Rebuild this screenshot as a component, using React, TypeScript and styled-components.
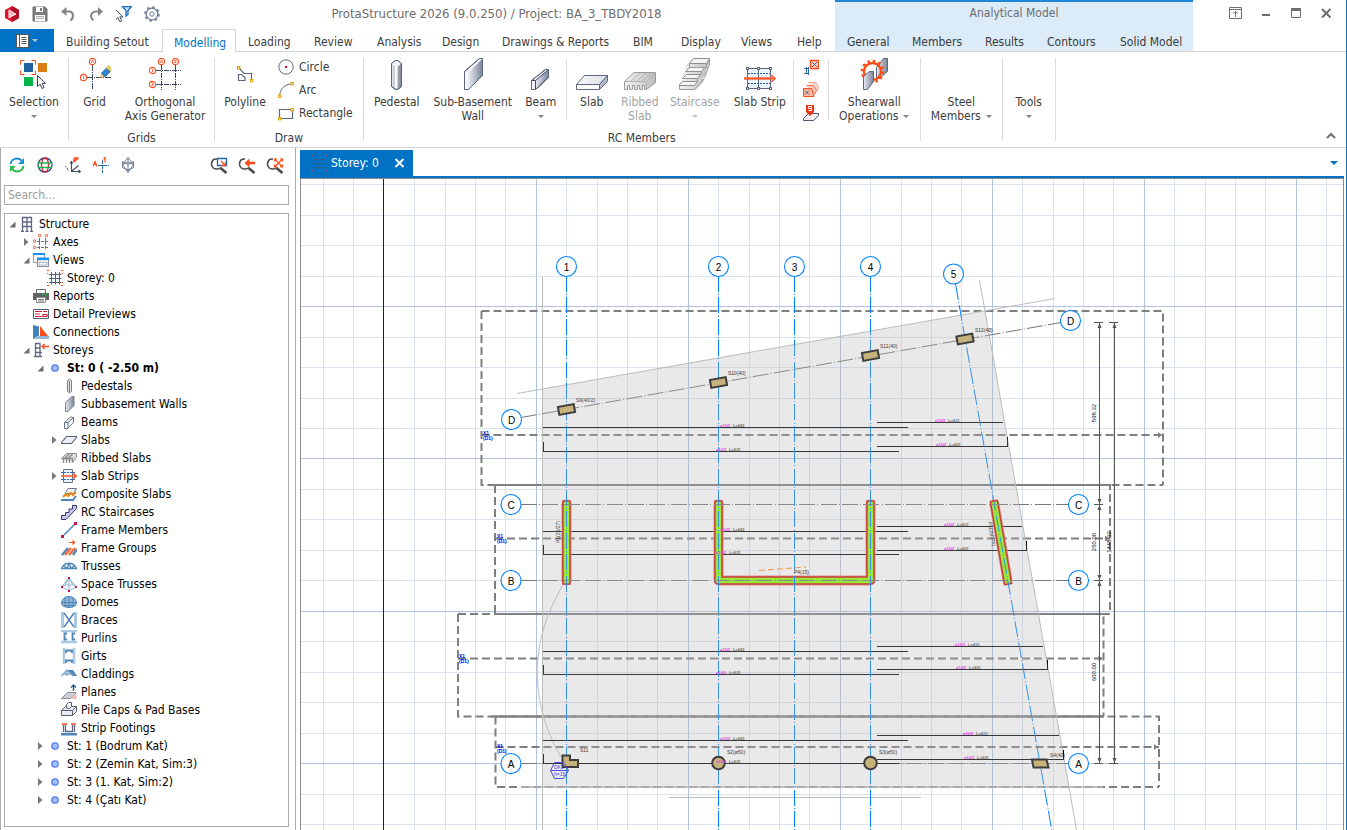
import React from 'react';
import styled, { createGlobalStyle } from 'styled-components';

const UI_FONT = '"DejaVu Sans Condensed", "Noto Sans", "Liberation Sans", sans-serif';
const BLUE = '#0072c6';
const EDGE = '#ababab';
const RULE = '#d5d5d5';
const INK = '#3f4a63';
const HOT = '#ff4a1a';

const GlobalStyle = createGlobalStyle`
  * { box-sizing: border-box; }
  html, body { margin: 0; padding: 0; }
  body { background: #fff; font-family: ${UI_FONT}; font-size: 12px; color: #3c3c3c; }
  button, input { font: inherit; color: inherit; }
`;

/* ---------- shell ---------- */

const Window = styled.div`
  display: flex;
  flex-direction: column;
  height: 100vh;
  overflow: hidden;
  background: #fff;
  border-right: 1px solid #1a6fb5;
`;

const PlainButton = styled.button`
  border: 0;
  padding: 0;
  margin: 0;
  background: none;
  display: inline-flex;
  align-items: center;
  justify-content: center;
  svg { flex: none; }
`;

const Header = styled.header`
  display: flex;
  height: 52px;
  flex: none;
  border-bottom: 1px solid ${RULE};
`;

const HeaderMain = styled.div`
  display: flex;
  flex-direction: column;
`;

const TitleRow = styled.div`
  display: flex;
  flex: none;
  align-items: center;
  height: 29px;
`;

const QuickAccess = styled.div`
  display: flex;
  align-items: center;
  gap: 12px;
  padding: 0 0 2px 4px;
`;

const QuickButton = styled(PlainButton)`
  width: 16px;
  height: 16px;
`;

const WindowTitle = styled.h1`
  flex: 1;
  margin: 0;
  padding-bottom: 2px;
  text-align: center;
  font-size: 13px;
  font-weight: 400;
  color: #6d6d6d;
`;

const TabRow = styled.nav`
  display: flex;
  flex: none;
  height: 22px;
`;

const FileButton = styled(PlainButton)`
  width: 54px;
  height: 23px;
  background: ${BLUE};
  gap: 3px;
`;

const Tab = styled(PlainButton)<{ $w: number; $active?: boolean }>`
  justify-content: flex-start;
  width: ${p => p.$w}px;
  padding: 3px 0 0 ${p => (p.$active ? 11 : 12)}px;
  height: 23px;
  white-space: nowrap;
  color: ${p => (p.$active ? BLUE : '#3c3c3c')};
  background: ${p => (p.$active ? '#fff' : 'transparent')};
  border: ${p => (p.$active ? `1px solid ${RULE}` : '0')};
  border-bottom: 0;
`;

const ContextGroup = styled.div`
  display: flex;
  flex-direction: column;
  margin-left: 2px;
  background: #dbebf8;
  border-top: 2px solid #1f86d8;
`;

const ContextTitle = styled.div`
  flex: none;
  height: 27px;
  padding-top: 4px;
  text-align: center;
  color: #6d6d6d;
`;

const WindowControls = styled.div`
  display: flex;
  margin-left: auto;
  padding: 5px 12px 0 0;
  gap: 14px;
`;

/* ---------- ribbon ---------- */

const Ribbon = styled.div`
  display: flex;
  height: 96px;
  flex: none;
  border-bottom: 1px solid ${RULE};
`;

const Group = styled.section`
  display: flex;
  flex-direction: column;
  position: relative;
  padding: 3px 0 0;
`;

const Divider = styled.div<{ $short?: boolean }>`
  width: 1px;
  margin-top: ${p => (p.$short ? 5 : 6)}px;
  height: ${p => (p.$short ? 60 : 83)}px;
  background: #dcdcdc;
`;

const GroupItems = styled.div<{ $pad?: number }>`
  display: flex;
  height: 76px;
  padding: 0 ${p => p.$pad ?? 0}px;
`;

const GroupLabel = styled.div`
  text-align: center;
  line-height: 14px;
`;

const BigButton = styled(PlainButton)<{ $w: number }>`
  flex-direction: column;
  justify-content: flex-start;
  width: ${p => p.$w}px;
  padding-top: 3px;
  line-height: 14px;
  &:disabled { color: #a3a3a3; }
`;

const BigIcon = styled.span`
  display: block;
  width: 32px;
  height: 32px;
  margin-bottom: 5px;
  svg { display: block; }
`;

const BigLabel = styled.span`
  white-space: nowrap;
`;

const Caret = styled.span<{ $light?: boolean }>`
  display: inline-block;
  border: 3px solid transparent;
  border-top-color: ${p => (p.$light ? '#c4c4c4' : '#808080')};
  border-bottom: 0;
`;

const CaretLine = styled.span`
  display: flex;
  align-items: center;
  height: 14px;
  gap: 5px;
`;

const SmallStack = styled.div`
  display: flex;
  flex-direction: column;
  padding: 0 5px 0 8px;
`;

const SmallButton = styled(PlainButton)`
  height: 23px;
  gap: 5px;
  justify-content: flex-start;
`;

const IconStack = styled.div`
  display: flex;
  flex-direction: column;
  width: 34px;
  align-items: center;
`;

const Collapse = styled(PlainButton)`
  margin: 78px 10px 0 auto;
  width: 10px;
  height: 12px;
`;

/* ---------- side panel ---------- */

const Body = styled.div`
  display: flex;
  flex: 1;
  min-height: 0;
`;

const Side = styled.aside`
  display: flex;
  flex-direction: column;
  width: 296px;
  flex: none;
  padding: 0 6px 3px 3px;
  border-left: 1px solid ${EDGE};
  border-right: 1px solid ${EDGE};
`;

const SideTools = styled.div`
  display: flex;
  align-items: center;
  gap: 12px;
  height: 33px;
  padding: 0 6px 0 5px;
  margin-bottom: 4px;
`;

const SideSpacer = styled.span`
  flex: 1;
`;

const Search = styled.input`
  height: 20px;
  padding: 0 3px;
  border: 1px solid ${EDGE};
  outline: 0;
  &::placeholder { color: #9b9b9b; opacity: 1; }
`;

const Tree = styled.ul`
  flex: 1;
  margin: 8px 0 0;
  padding: 1px 0 0;
  list-style: none;
  border: 1px solid ${EDGE};
  overflow: hidden;
  color: #000;
`;

const Row = styled.li<{ $level: number; $bold?: boolean }>`
  display: flex;
  align-items: center;
  height: 18px;
  padding-left: ${p => 1 + p.$level * 14}px;
  white-space: nowrap;
  font-weight: ${p => (p.$bold ? 700 : 400)};
`;

const Twisty = styled.span`
  display: flex;
  justify-content: center;
  width: 13px;
`;

const RowIcon = styled.span`
  width: 16px;
  height: 16px;
  margin-right: 4px;
  svg { display: block; }
`;

/* ---------- document ---------- */

const Doc = styled.main`
  display: flex;
  flex-direction: column;
  flex: 1;
  min-width: 0;
  margin: 2px 2px 0 4px;
`;

const DocTabs = styled.div`
  display: flex;
  align-items: center;
  justify-content: space-between;
  height: 28px;
  border-bottom: 2px solid ${BLUE};
`;

const DocTab = styled.div`
  display: flex;
  align-items: center;
  gap: 4px;
  width: 113px;
  height: 26px;
  padding: 0 8px 0 11px;
  background: ${BLUE};
  color: #fff;
`;

const DocName = styled.span`
  flex: 1;
`;

const DocMenu = styled(PlainButton)`
  width: 20px;
  height: 20px;
  span { border-width: 4px 4px 0; border-top-color: ${BLUE}; }
`;

const Canvas = styled.div`
  flex: 1;
  min-height: 0;
  overflow: hidden;
  border: 1px solid #8c8c8c;
  border-bottom: 0;
  svg { display: block; width: 100%; height: 100%; }
`;

/* ---------- icons ---------- */

const Svg = ({ s = 16, children }: { s?: number; children: React.ReactNode }) => (
  <svg width={s} height={s} viewBox={`0 0 ${s} ${s}`} fill="none" stroke={INK} strokeWidth="1" aria-hidden="true">
    {children}
  </svg>
);

const Defs = () => (
  <svg width="0" height="0" style={{ position: 'absolute' }} aria-hidden="true">
    <defs>
      <linearGradient id="steel"><stop offset="0" stopColor="#e9ebf1" /><stop offset="1" stopColor="#7a8399" /></linearGradient>
      <linearGradient id="pale"><stop offset="0" stopColor="#f8f8fb" /><stop offset="1" stopColor="#dddfe6" /></linearGradient>
      <linearGradient id="dim"><stop offset="0" stopColor="#f3f3f3" /><stop offset="1" stopColor="#bdbdbd" /></linearGradient>
    </defs>
  </svg>
);

const Cursor = ({ x, y }: { x: number; y: number }) => (
  <path transform={`translate(${x} ${y})`} d="M.5 .5v11l2.6-2.4 2 4.4 2-1-2-4.2h3.4z" fill="#fff" stroke="#36404f" />
);

const Node = ({ x, y }: { x: number; y: number }) => (
  <rect x={x - 1} y={y - 1} width="2.4" height="2.4" fill="#fff3c0" stroke="#d9a400" />
);

const Logo = () => (
  <Svg>
    <path d="M8 0l7 4v8l-7 4-7-4V4z" fill="#e3122d" stroke="none" />
    <path d="M8 0l7 4v8l-7 4z" fill="#b30d24" stroke="none" />
    <path d="M5 12V4l7 4.2-4 1.8zM5 8l3 1" fill="#f6a6ae" stroke="#fff" />
  </Svg>
);
const Save = () => (
  <Svg><path d="M1 1h12l2 2v12H1z" fill="#7b7b7b" stroke="#6f6f6f" /><path d="M4 1h7v5H4zM3 9h10v6H3z" fill="#fff" stroke="none" /><path d="M8 2h2v3H8z" fill="#7b7b7b" stroke="none" /><path d="M4 10.5h8M4 12.5h8" stroke="#a5a5a5" /></Svg>
);
const Undo = () => (
  <Svg><path d="M3 5.5h6c3 0 4 2.3 4 4.5s-1 3.5-2.5 4.5" stroke="#858585" strokeWidth="2.2" /><path d="M6.5 1v9L1 5.5z" fill="#858585" stroke="none" /></Svg>
);
const Redo = () => (
  <Svg><path d="M12 5.5H8c-3 0-5 2.3-5 4.5s1 3.5 2.5 4.5" stroke="#858585" strokeWidth="2" /><path d="M10 1v9l5-4.500z" fill="#858585" stroke="none" /></Svg>
);
const Filter = () => (
  <Svg><path d="M6.5 .5h9l-3.500 4v4l-2 1.500V4.500z" fill="#cfe5f7" stroke="#1b74bd" strokeWidth="1.4" /><g transform="translate(-1 3) scale(.95)"><Cursor x={0} y={0} /></g></Svg>
);
const Cog = () => (
  <Svg><circle cx="8" cy="8" r="5.8" stroke="#6b7c9b" strokeWidth="1.3" /><circle cx="8" cy="8" r="2.2" stroke="#6b7c9b" /><circle cx="8" cy="8" r="7" stroke="#6b7c9b" strokeWidth="1.6" strokeDasharray="2.5 3" /></Svg>
);
const FileGlyph = () => (
  <svg width="13" height="14" viewBox="0 0 13 14" aria-hidden="true"><path d="M.5 .5h12v13H.5z" fill="#fff" stroke="#555" /><path d="M3.500 0v14" stroke="#555" /><path d="M5.500 3.500h5M5.500 5.500h5M5.500 7.500h5M5.500 9.500h5" stroke="#555" /></svg>
);

const SelectionIcon = () => (
  <Svg s={32}>
    <path d="M6 5h9v9H6z" fill="#1f63a3" stroke="none" /><path d="M20 5h9v9h-9z" fill="#dc7d12" stroke="none" /><path d="M6 19h9v9H6z" fill="#05b54a" stroke="none" />
    <path d="M2.500 6.500v-4h4M13.500 2.500h4v4M17.500 12.500v4h-4M6.500 16.500h-4v-4" stroke={HOT} />
    <Cursor x={19} y={17} />
  </Svg>
);
const Ring = ({ x, y, t }: { x: number; y: number; t: string }) => (
  <g><circle cx={x} cy={y} r="3.1" fill="#fff" stroke={HOT} strokeWidth="1.1" /><path transform={`translate(${x} ${y})`} d={t} stroke={HOT} strokeWidth=".8" /></g>
);
const MARK_A = 'M-1.2 1.5L0-1.5L1.2 1.5';
const MARK_1 = 'M0-1.5V1.5';
const MARK_2 = 'M-1-1.2H1L-1 1.2H1.2';
const GridIcon = () => (
  <Svg s={32}>
    <path d="M13.500 7v25M8 19.500h24" strokeDasharray="6 1 1 1" /><Ring x={13.5} y={3.5} t={MARK_A} /><Ring x={4.5} y={19.5} t={MARK_1} />
    <path d="M21 20l2-5 3 3z" fill="#f6d48b" stroke="#b98a2b" strokeWidth=".5" /><path d="M22.500 15l5-5 4 3.500-5.500 5.500z" fill="#2b87d1" stroke="#1d5e97" strokeWidth=".7" /><path d="M27.500 10l2-2.500 3 3-1 3z" fill="#f5d257" stroke="#c19a22" strokeWidth=".5" />
  </Svg>
);
const OrthoIcon = () => (
  <Svg s={32}>
    <path d="M12.500 7v25M26.500 7v25M7 12.500h25M7 26.500h25" strokeDasharray="5 1 1 1" />
    <Ring x={12.5} y={3.5} t={MARK_A} /><Ring x={26.5} y={3.5} t={MARK_2} /><Ring x={3.5} y={12.5} t={MARK_1} /><Ring x={3.5} y={26.5} t={MARK_2} />
  </Svg>
);
const PolylineIcon = () => (
  <Svg s={32}><path d="M9.500 9.500l5.500 6h7.500v7M9.500 16.500h3l3.500 3v3H9.500z" stroke="#5d6781" strokeWidth="1.2" /><Node x={9.5} y={9.5} /><Node x={22.5} y={22.5} /></Svg>
);
const CircleIcon = () => (<Svg><circle cx="8" cy="8" r="7.2" stroke="#5d6781" /><rect x="7" y="7" width="2" height="2" fill="#e00028" stroke="none" /></Svg>);
const ArcIcon = () => (<Svg><path d="M1.500 14.500C2 7 6 2.500 14.500 1.500" stroke="#5d6781" /><Node x={1.5} y={14} /><Node x={14} y={1.5} /></Svg>);
const RectIcon = () => (<Svg><path d="M1.500 4.500h13v9h-13z" stroke="#5d6781" strokeWidth="1.2" /><Node x={14} y={4.5} /><Node x={1.5} y={13.5} /></Svg>);
const PedestalIcon = () => (
  <Svg s={32}><path d="M10.500 5.500l4-3h2l4 3v23l-4 3h-2l-4-3z" fill="url(#steel)" stroke="#5d6781" /><path d="M10.500 5.500l4 3h2l4-3-4-3h-2z" fill="#f4f5f9" stroke="none" /><path d="M14 8h2.500v22H14z" fill="#fff" stroke="none" /><path d="M10.500 5.500l4-3h2l4 3v23l-4 3h-2l-4-3z" stroke="#5d6781" /></Svg>
);
const WallIcon = () => (
  <Svg s={32}><path d="M7.500 13.500l15-13h3v17l-14 14h-4z" fill="#f4f5f9" /><path d="M11.500 14.500l14-14v17l-14 14z" fill="url(#steel)" stroke="none" /><path d="M7.500 13.500l15-13h3v17l-14 14h-4z" stroke="#5d6781" /></Svg>
);
const BeamIcon = () => (
  <Svg s={32}><path d="M6.500 22.500l14-11h3v8l-13 12h-4z" fill="#f4f5f9" /><path d="M10.500 22.500l13-11v8l-13 12z" fill="url(#steel)" /><path d="M6.500 22.500h4" /><path d="M6.500 22.500l14-11h3v8l-13 12h-4z" stroke="#5d6781" /></Svg>
);
const SlabIcon = () => (
  <Svg s={32}><path d="M.5 26.500v5h23l8-8v-6h-23z" fill="#fff" stroke="none" /><path d="M.5 26.500l8-9h23l-8 9z" fill="url(#pale)" stroke="#5d6781" /><path d="M23.500 26.500l8-9v6l-8 8z" fill="#b4bac9" stroke="#5d6781" /><path d="M.5 26.500v5h23" stroke="#5d6781" /></Svg>
);
const RibbedIcon = () => (
  <Svg s={32}><path d="M.5 23.500l9.500-9h21.500v10l-9 7h-2v-4h-2v4h-3v-4h-2v4h-3v-4h-2v4h-3v-4h-2v4H.5z" fill="url(#dim)" stroke="#9a9a9a" /><path d="M.5 23.500h22l9-9M22.500 23.500v8M7 23l9-8M13 23l9-8M18 23l9-8" stroke="#b4b4b4" /></Svg>
);
const StairIcon = () => (
  <Svg s={32}>
    <path d="M.5 31.500v-6l3-4v-5l3-3v-5l2-3 6-5h16v5l-3 6v4l-3 4v4l-7 8z" fill="url(#dim)" stroke="none" />
    <path d="M10.500 5.500l4-5h16l-3 5zM7.500 12.500l3-3h15l-3 4h-16zM4.500 19.500l3-3h14l-3 4h-15zM.5 26.500l3-3h15l-3 4H.5z" fill="#f5f5f5" stroke="#8f8f8f" />
    <path d="M27.500 5.500v4h-17v-4M22.500 13.500v3M18.500 20.500v3M.5 26.500v5h15l10-11M30.500 .5v6l-5 13" stroke="#9a9a9a" />
  </Svg>
);
const StripIcon = () => (
  <Svg s={32}><path d="M3.500 10.500h23v20h-23z" fill="#edf3fa" stroke="#5d6781" /><path d="M14.500 10.500v20" stroke="#5d6781" /><path d="M4 15.500h22M4 25.500h22" stroke="#1d5fa0" strokeDasharray="2 1" /><path d="M0 20.500h29" stroke="#ff5a2b" strokeWidth="2.4" /><path d="M27 17l4 3.500-4 3.500" stroke="#ff5a2b" strokeWidth="1.6" />
    {[3.5, 14.5, 26.5].map(x => [10.5, 30.5].map(y => <rect key={`${x}${y}`} x={x - 1} y={y - 1} width="2" height="2" fill="#fff" stroke="#5d6781" />))}</Svg>
);
const ShearIcon = () => (
  <Svg s={32}><path d="M18.500 9.500l7-9h4v13l-8 7h-3z" fill="url(#steel)" stroke="#5d6781" /><circle cx="14.5" cy="13.5" r="8.5" stroke="#ff4a10" strokeWidth="2.4" /><circle cx="14.5" cy="13.5" r="10.6" stroke="#ff4a10" strokeWidth="2.4" strokeDasharray="2.5 3.05" /><path d="M5.500 18.500l6-5h4v10l-6 8h-4z" fill="url(#steel)" stroke="#5d6781" /></Svg>
);
const OpeningIcon = () => (<Svg><path d="M7.500 1.500h8v8h-8z" fill="#ffd2c2" stroke="#ff4a1a" strokeWidth="1.4" /><path d="M9 3l5 5M14 3L9 8" stroke="#475a80" /><path d="M1 9.500h5M3.500 8v6M1 14.500h5M5.500 8v8" stroke="#2b6aa8" /></Svg>);
const CopiesIcon = () => (<Svg><path d="M5.500 .5h7l3 5-2 4" fill="#ffe0d6" stroke="#f29a80" /><path d="M3.500 3.500h7l3 5-2 4" fill="#ffc9b8" stroke="#f2714c" /><path d="M.5 6.500h8l2.500 8H.5z" fill="#ffbba5" stroke="#f0491c" /><path d="M2 8.500l4 4M6 8.500l-4 4" stroke="#475a80" /></Svg>);
const LoadIcon = () => (<Svg><path d="M.5 13.500l5-5h10v2l-5 5H.5z" fill="#eef0f5" stroke="#4b5670" /><path d="M3 0h8v7l-4 4-4-4z" fill="#e8341a" stroke="none" /><path d="M8.500 3.500h-3v-2h3v4h-3" stroke="#fff" /></Svg>);

const RefreshIcon = () => (<Svg><path d="M1.500 7C2 3.500 5 1.500 8 1.500c2 0 3.500 1 4.500 2" stroke="#1990d8" strokeWidth="2" /><path d="M15 1v6H9z" fill="#1990d8" stroke="none" /><path d="M14.500 9c-.5 3.500-3.500 5.500-6.500 5.500-2 0-3.500-1-4.500-2" stroke="#2bb84c" strokeWidth="2" /><path d="M1 15V9h6z" fill="#2bb84c" stroke="none" /></Svg>);
const GlobeIcon = () => (<Svg><circle cx="8" cy="8" r="7" stroke="#25488a" strokeWidth="1.3" /><ellipse cx="8" cy="8" rx="3.5" ry="7" stroke="#d3232a" strokeWidth="1.3" /><path d="M1 6h14M1 10.500h14" stroke="#1fae4a" strokeWidth="1.3" /></Svg>);
const AxesIcon = () => (<Svg><path d="M6.500 5v9.500h9M6.500 14.500l7-6M5 6.500l1.500-2 1.500 2M13.500 13l2 1.500-2 1.500" stroke="#3f4a63" strokeWidth="1.1" /><path d="M0 10c1-2 2 2 4 4" strokeDasharray="2 1" /><path d="M9 5c1-1.500 2-2.500 4.500-4M9 1h4.500M9 1.500V5" stroke={HOT} strokeWidth="1.6" /></Svg>);
const LabelIcon = () => (<Svg><path d="M9.500 3v13M5 8.500h11" stroke="#2b6aa8" strokeDasharray="4 1" /><path d="M0 9.500l2-5 2 5M.8 7.500h2.500M10.500 2l1.500-1.500v5" stroke={HOT} strokeWidth="1.2" /></Svg>);
const CubeIcon = () => (<Svg><path d="M7 .5l5.500 7L7 15.500 1.500 7.500zM7 .5v15M1.500 4.500l5.500 3 5.500-3v6L7 13l-5.500-2.500zM1.500 7.500L7 5l5.500 2.500" stroke="#65708a" strokeWidth=".9" /></Svg>);
const Lens = ({ children }: { children: React.ReactNode }) => (<svg width="18" height="18" viewBox="0 0 18 18" fill="none" aria-hidden="true"><path d="M7 3C3.500 2.500 1.500 5 1.500 8s2.500 5 5.500 5c1.500 0 3-.5 4-1.500" stroke="#4a4a4a" strokeWidth="1.6" /><path d="M10.500 12l6 5" stroke="#4a4a4a" strokeWidth="2.6" />{children}</svg>);
const ZoomWindow = () => (<Lens><path d="M7.500 2.500h9v7h-9z" fill="#fff" stroke="#1c67a9" strokeWidth="1.3" /><path d="M11 5l4.500 4.500M15.500 6v3.500H12" stroke={HOT} strokeWidth="1.3" /></Lens>);
const ZoomPrev = () => (<Lens><path d="M17 7h-8" stroke={HOT} strokeWidth="2.6" /><path d="M11.500 2.500v9L6.500 7z" fill={HOT} /></Lens>);
const ZoomAll = () => (<Lens><path d="M8.500 3l8 8M16.500 3l-8 8" stroke={HOT} strokeWidth="1.2" /><path d="M8.500 5.500V3H11M14 3h2.500v2.500M16.500 8.500V11H14M11 11H8.500V8.500" stroke={HOT} strokeWidth="1.2" /></Lens>);

const S = '#4f86b8';
const treeIcons: Record<string, React.ReactNode> = {
  structure: <Svg><path d="M3.500 15V1.500h9V15M8 1.500V15M3.500 6h9M3.500 10.500h9M2 15.500h3M6.500 15.500h3M11 15.500h3" stroke="#5d6781" strokeWidth="1.3" /></Svg>,
  axes: <Svg><path d="M6.500 4v12M12.500 4v12M4 7.500h12M4 13.500h12" strokeDasharray="3 1" stroke="#65708a" /><g stroke={HOT}><circle cx="6.500" cy="1.500" r="1.2" /><circle cx="13.500" cy="1.500" r="1.2" /><circle cx="1.500" cy="7" r="1.2" /><circle cx="1.500" cy="13.500" r="1.2" /></g></Svg>,
  views: <Svg><path d="M.5 1.500h11v9H.5z" fill="#f4f5f7" stroke="#9aa0aa" /><path d="M0 1h12v2H0z" fill="#1493f5" stroke="none" /><path d="M4.500 6.500h11v8h-11z" fill="#e8eaee" stroke="#8b929f" /><path d="M4 5.500h12v2.500H4z" fill="#1493f5" stroke="none" /><path d="M6 10.500h8v2.500H6z" fill="#fff" stroke="#b9bec8" /></Svg>,
  storey: <Svg><path d="M4.500 2v12.500M8.500 2v12.500M12.500 2v12.500M2 4.500h12.500M2 8.500h12.500M2 12.500h12.500" stroke="#56607a" /><path d="M0 .5h2M14 .5h2M0 15.500h2M14 15.500h2M.5 3v1M15.500 3v1M.5 12v1M15.500 12v1" stroke={HOT} /></Svg>,
  reports: <Svg><path d="M3.500 1.500h9v5h-9z" fill="#fff" stroke="#6c6c6c" /><path d="M0 5h16v7H0z" fill="#5e6266" stroke="none" /><path d="M3.500 9.500h9v5h-9z" fill="#fff" stroke="#8c8c8c" /><path d="M9 6.500h2M12 6.500h2" stroke="#26c04b" strokeWidth="1.4" /><path d="M5 11.500h6M5 13h6" stroke="#777" /></Svg>,
  detail: <Svg><path d="M.5 3.500h15v9H.5z" fill="#fff" stroke="#555f75" /><path d="M2 5.500h7M2 8h5M2 10.500h7M10 5.500h4M10 8.500h4v2h-4z" stroke="#d3243a" strokeWidth="1.2" /></Svg>,
  connections: <Svg><path d="M0 1l6 1.500v9L0 15z" fill="#3f81b8" stroke="none" /><path d="M7 2l8 10H7z" fill="#ff4a1a" stroke="none" /><path d="M0 15l6-3h10v3z" fill="#8fb6d6" stroke="none" /></Svg>,
  storeys: <Svg><path d="M2.500 15V1.500h5M7 1.500V15M2.500 6H7M2.500 10.500H7M1 14.500h8M9 10.500H7" stroke="#5d6781" strokeWidth="1.3" /><path d="M16 4.500H9M11.500 2L9 4.500 11.500 7" stroke={HOT} strokeWidth="1.3" /></Svg>,
  dot: <Svg><circle cx="8" cy="8" r="3.2" fill="#9cc5ff" stroke="#5b78ff" strokeWidth="1.3" /></Svg>,
  pedestals: <Svg><path d="M6.500 2.500l2-1.500 2 1.500v11l-2 1.500-2-1.500zM8.500 3v11" fill="#e3e5ea" stroke="#777f90" /></Svg>,
  walls: <Svg><path d="M4.500 6.500l6.500-6h2v9l-6 6h-2.500z" fill="url(#steel)" stroke="#777f90" /></Svg>,
  beams: <Svg><path d="M3.500 8.500l6-5.500 3 .5v5l-6 6h-3z" fill="#f2f3f6" stroke="#6b748a" /><path d="M7 8.500l5.500-5M7 8.500v6M3.500 8.500H7" stroke="#6b748a" /></Svg>,
  slabs: <Svg><path d="M.5 10.500l5-6h10v1l-5 6H.5z" fill="#eef0f5" stroke="#56607a" strokeWidth="1.1" /></Svg>,
  ribbed: <Svg><path d="M.5 8.500l5-5h10v4l-4 5" fill="#dcdde0" stroke="#909090" /><path d="M.5 8.500h11v4M2.500 9v4M5.500 9v4M8.500 9v4M4 8l4-4M7.500 8l4-4" stroke="#8a8a8a" strokeWidth="1.3" /></Svg>,
  strips: <Svg><path d="M2.500 1.500h9v13h-9z" fill="#eaf2fb" stroke="#65708a" /><path d="M0 4.500h14M0 11.500h14" stroke="#2b6aa8" strokeDasharray="2 1" /><path d="M0 8h15M12.500 5.500L15 8l-2.500 2.500" stroke="#ff5a2b" strokeWidth="1.6" /></Svg>,
  composite: <Svg><path d="M4 7.500l3-5h8.500l-3 5z" fill="#eef0f5" stroke="#6b748a" /><path d="M2 11l3-3 2 2 3-3 2 2 3-3" stroke="#e08a1c" strokeWidth="2" /><path d="M0 14h12l3-4" stroke={S} strokeWidth="2" /></Svg>,
  stairs: <Svg><path d="M.5 15.500v-4h4v-3h3.500v-3.500h3.500V1.500h4v3L5 15.500z" fill="#c6c8ee" stroke="#33356c" /></Svg>,
  frame: <Svg><path d="M3 13L14 2" stroke={S} strokeWidth="1.6" /><path d="M0 13h3v3H0zM13 0h3v3h-3z" fill="#c2154f" stroke="none" /></Svg>,
  groups: <Svg><path d="M1 15l6-7M12 15l4-6" stroke={S} strokeWidth="2.4" /><path d="M4 15l6-7M8 15l6-7" stroke="#f4683c" strokeWidth="2.4" /><path d="M8 2.500h6M11.500 .5l2 2-2 2" stroke={HOT} strokeWidth="1.2" /></Svg>,
  trusses: <Svg><path d="M.5 10.500C4 3.500 12 3.500 15.500 10.500zM3 8l3 2.500 2-5 2 5L13 8" stroke={S} strokeWidth="1.4" /></Svg>,
  space: <Svg><path d="M8 2L.5 11 8 14.500 15.500 11zM8 2v12.500M8 2l-4 7h8zM.5 11l3.500-2M15.500 11L12 9" stroke="#8fb6d6" /><path d="M7 1h2v2H7zM0 10h2v2H0zM14 10h2v2h-2zM7 14h2v2H7z" fill="#c2154f" stroke="none" /></Svg>,
  domes: <Svg><path d="M.5 9.500C.5 5 4 2.500 8 2.500s7.500 2.500 7.500 7c0 2-3.500 4-7.500 4s-7.500-2-7.500-4z" fill="#8fb6d6" stroke={S} /><path d="M0 8.500h16M8 2.500v11M4 4v9M12 4v9M2 11.500h12" stroke={S} /></Svg>,
  braces: <Svg><path d="M1.500 0v16M14.500 0v16" stroke="#a9c8e2" strokeWidth="3" /><path d="M3 1l10 14M13 1L3 15" stroke={S} strokeWidth="1.5" /></Svg>,
  purlins: <Svg><path d="M0 1h16M0 12h16" stroke="#a9c8e2" strokeWidth="2.5" /><path d="M6 3.500H3.500v6H6M14 3.500h-2.500v6H14" stroke={S} strokeWidth="1.8" /></Svg>,
  girts: <Svg><path d="M3 0v16M13 0v16" stroke="#a9c8e2" strokeWidth="2.5" /><path d="M5 5V2.500h6V5M5 15v-2.500h6V15" stroke={S} strokeWidth="1.8" /></Svg>,
  claddings: <Svg><path d="M6 4h6l4 6h-4z" fill="#4f86b8" stroke="none" /><path d="M.5 10l5.500-6 6 6M6 4v6M2 8h8" stroke="#7faacd" strokeWidth="1.4" /></Svg>,
  planes: <Svg><path d="M.5 14.500l6-6h9l-6 6z" fill="#cdcfd6" stroke="#8b8f99" /><path d="M10 15l5.500-5v5z" fill="#ffb09a" stroke="none" /><path d="M12.500 7V1M10 3.500L12.500 1 15 3.500" stroke="#1d5e97" strokeWidth="1.4" /></Svg>,
  caps: <Svg><path d="M.5 8.500l4-4h11v5l-4 4H.5z" fill="#e9eaee" stroke="#56607a" /><path d="M5.500 6V2.500L7.500.5h3v4l-2 2z" fill="#f6f6f8" stroke="#56607a" /><path d="M.5 8.500h11l4-4M11.500 8.500v5" stroke="#56607a" /></Svg>,
  footings: <Svg><path d="M0 13h16v2.500H0z" fill={S} stroke="none" /><path d="M4.500 5v6.500h7V5M2.500 12V5M13.500 12V5" stroke="#5d6781" strokeWidth="1.3" /><path d="M1 4h5M10 4h5" stroke={HOT} strokeWidth="1.6" /></Svg>,
};

/* ---------- tree data ---------- */

type Item = { level: number; icon: string; text: string; open?: boolean; closed?: boolean; bold?: boolean };
const tree: Item[] = [
  { level: 0, icon: 'structure', text: 'Structure', open: true },
  { level: 1, icon: 'axes', text: 'Axes', closed: true },
  { level: 1, icon: 'views', text: 'Views', open: true },
  { level: 2, icon: 'storey', text: 'Storey: 0' },
  { level: 1, icon: 'reports', text: 'Reports' },
  { level: 1, icon: 'detail', text: 'Detail Previews' },
  { level: 1, icon: 'connections', text: 'Connections' },
  { level: 1, icon: 'storeys', text: 'Storeys', open: true },
  { level: 2, icon: 'dot', text: 'St: 0 ( -2.50 m)', open: true, bold: true },
  { level: 3, icon: 'pedestals', text: 'Pedestals' },
  { level: 3, icon: 'walls', text: 'Subbasement Walls' },
  { level: 3, icon: 'beams', text: 'Beams' },
  { level: 3, icon: 'slabs', text: 'Slabs', closed: true },
  { level: 3, icon: 'ribbed', text: 'Ribbed Slabs' },
  { level: 3, icon: 'strips', text: 'Slab Strips', closed: true },
  { level: 3, icon: 'composite', text: 'Composite Slabs' },
  { level: 3, icon: 'stairs', text: 'RC Staircases' },
  { level: 3, icon: 'frame', text: 'Frame Members' },
  { level: 3, icon: 'groups', text: 'Frame Groups' },
  { level: 3, icon: 'trusses', text: 'Trusses' },
  { level: 3, icon: 'space', text: 'Space Trusses' },
  { level: 3, icon: 'domes', text: 'Domes' },
  { level: 3, icon: 'braces', text: 'Braces' },
  { level: 3, icon: 'purlins', text: 'Purlins' },
  { level: 3, icon: 'girts', text: 'Girts' },
  { level: 3, icon: 'claddings', text: 'Claddings' },
  { level: 3, icon: 'planes', text: 'Planes' },
  { level: 3, icon: 'caps', text: 'Pile Caps & Pad Bases' },
  { level: 3, icon: 'footings', text: 'Strip Footings' },
  { level: 2, icon: 'dot', text: 'St: 1 (Bodrum Kat)', closed: true },
  { level: 2, icon: 'dot', text: 'St: 2 (Zemin Kat, Sim:3)', closed: true },
  { level: 2, icon: 'dot', text: 'St: 3 (1. Kat, Sim:2)', closed: true },
  { level: 2, icon: 'dot', text: 'St: 4 (Çatı Kat)', closed: true },
];

/* ---------- floor plan ---------- */

const bubbles: [number, number, string][] = [
  [566.5, 266.5, '1'], [718.5, 266.5, '2'], [794.5, 266.5, '3'], [870.5, 266.5, '4'], [953.5, 274, '5'],
  [1070.5, 320.5, 'D'], [511.5, 419.5, 'D'], [511, 504.5, 'C'], [1078.5, 504.5, 'C'],
  [511, 580.5, 'B'], [1078.5, 580.5, 'B'], [511, 763.5, 'A'], [1078.5, 763.5, 'A'],
];

/* each strip zone: baselines of its four bars and where the right-hand ones stop */
const zones = [
  { y: [427, 451, 422, 446], end: [1003, 1007], tag: [935, 936] },
  { y: [531, 554, 526, 550], end: [1022, 1026], tag: [944, 944] },
  { y: [651, 674, 646, 669], end: [1043, 1047], tag: [955, 956] },
  { y: [740, 763, 735, 759], end: [1059, 1063], tag: [963, 964] },
];

const BarTag = ({ x, y, a, b }: { x: number; y: number; a: string; b: string }) => (
  <g fontSize="4">
    <text x={x} y={y} fill="#ff00ff" fontWeight="700">{a}</text>
    <text x={x + 13} y={y} fill="#555" fontWeight="700">{b}</text>
  </g>
);

const sectors: [number, number, number, number, number][] = [
  [481.5, 311, 1163, 485, 435], [495, 485, 1110, 614, 538.5], [458, 614, 1103.5, 716.5, 658.5], [495.5, 716.5, 1159, 787, 747],
];

const range = (from: number, step: number, count: number) => Array.from({ length: count }, (_, i) => Math.round(from + i * step) + 0.5);

/* the datum line stands in for the grid line at its own place */
const DATUM = 383.5;
const minorX = range(323, 30.4, 80).filter(x => Math.abs(x - DATUM) > 2);

const Plan = () => (
  <svg role="img" aria-label="Storey 0 plan" fill="none">
    <g transform="translate(-301 -179)">
      <g shapeRendering="crispEdges">
        <g stroke="#d9e2ef">
          {minorX.map(x => <path key={x} d={`M${x} 179V2400`} />)}
          {range(184.3, 30.46, 70).map(y => <path key={y} d={`M301 ${y}H2800`} />)}
        </g>
        <g stroke="#b0c4de">
          {range(536, 152, 15).map(x => <path key={x} d={`M${x} 179V2400`} />)}
          {range(306, 152.3, 14).map(y => <path key={y} d={`M301 ${y}H2800`} />)}
        </g>
        <path d={`M${DATUM} 179V2400`} stroke="#222" />
      </g>

      <g stroke="#7f7f7f" strokeWidth="2" strokeDasharray="8 4">
        {sectors.map(([x1, y1, x2, y2, m]) => (
          <g key={y1}>
            <path d={`M${x1} ${y1}H${x2}V${y2}M${x1} ${y1}V${y2}H${x2}M${x1} ${m}H${x2}`} />
            <path d={`M${x2 - 5} ${m - 3}l4 3-4 3z`} fill="#7f7f7f" stroke="none" />
          </g>
        ))}
      </g>
      <path d="M494 614H1110M491 716.500H1104" stroke="#808080" strokeWidth="2" />
      <path d="M521 787H1103" stroke="#c4c4c4" strokeWidth="2" />
      <path d="M521 787H1103" stroke="#a8a8a8" strokeWidth="2" strokeDasharray="8 4" />

      <g stroke="#bdbdbd">
        <path d="M542.500 276V2400M669 797.500H921" shapeRendering="crispEdges" />
        <path d="M517 393.500L1055 298.500M979.500 280L1253 1830" />
        <path d="M563 585C530 640 528 700 561 757" />
      </g>

      <g stroke="#777" strokeDasharray="16 2.200 1 2.200">
        <path d="M521 763.500H1068" shapeRendering="crispEdges" />
        <path d="M521 417.500L1061 322.500" />
      </g>

      <g stroke="#000" shapeRendering="crispEdges">
        {zones.map(({ y, end }) => (
          <path key={y[0]} d={`M543 ${y[0] + 0.5}H908M543.500 ${y[1] - 9}V${y[1] + 0.5}H899M877 ${y[2] + 0.5}H${end[0]}M877 ${y[3] + 0.5}H${end[1] + 0.5}V${y[3] - 9}`} />
        ))}
      </g>

      <g strokeLinecap="round" strokeLinejoin="round">
        <path d="M566.500 504.500V580.500M718.500 504.500V580.500H870.500V504.500M994.500 504.500L1007.500 580.500" stroke="#f08080" strokeWidth="10" />
        <path d="M566.500 504.500V580.500M718.500 504.500V580.500H870.500V504.500M994.500 504.500L1007.500 580.500" stroke="#d80808" strokeWidth="8.600" strokeLinecap="square" />
        <path d="M566.500 504.500V580.500M718.500 504.500V580.500H870.500V504.500M994.500 504.500L1007.500 580.500" stroke="#88ff05" strokeWidth="5.600" strokeLinecap="square" />
      </g>

      <g stroke="#0080ff" strokeDasharray="16 2.200 1 2.200">
        <path d="M566.500 276V2400M718.500 276V2400M794.500 276V2400M870.500 276V2400" shapeRendering="crispEdges" />
        <path d="M955.500 284L1228 1830" />
      </g>
      <g stroke="#777" shapeRendering="crispEdges">
        <path d="M521 504.500H1068M521 580.500H1068" strokeDasharray="16 2.200 1 2.200" />
        <path d="M521 504.500H537M521 580.500H537" />
      </g>

      <g fill="#cdb062" stroke="#0a0a0a" strokeWidth="2">
        {[[566.5, 409.5], [718.5, 382.5], [870.5, 355.5], [965, 339]].map(([x, y]) => (
          <rect key={x} x={x - 8} y={y - 4} width="16" height="8" transform={`rotate(-10 ${x} ${y})`} />
        ))}
        <circle cx="718.500" cy="763" r="6.300" /><circle cx="870.500" cy="763" r="6.300" />
        <path d="M1032 759.500h14.500l2 8h-15zM562.500 755.500h7.500v4.500h8v7h-15.500z" />
      </g>
      <path d="M550.500 770.500l4-8h9l5 8-5 8h-9zM550.500 770.500h18" stroke="#2020f0" />
      <path d="M759 570.500L806 567" stroke="#ff8c1a" strokeDasharray="6 3" />

      <g fontFamily="Liberation Sans" fontSize="5" fill="#000">
        <text x="576" y="402">S9(40/2)</text><text x="728" y="375">S10(40)</text>
        <text x="880" y="348">S11(40)</text><text x="975" y="332">S12(40)</text>
        <text x="580" y="752">S11</text><text x="727" y="754">S2(ø50)</text>
        <text x="879" y="754">S3(ø50)</text><text x="1050" y="757">S4(40)</text>
        <text x="794" y="574">P4(15)</text>
        <text transform="translate(560 543) rotate(-90)">P1(25/27)</text>
        <text transform="translate(988 522) rotate(80)">P3(25/275)</text>
        <g fill="#2020f0"><text x="554" y="769">DK1</text><text x="554" y="776">h=15</text></g>
        {zones.map(({ y, tag }) => (
          <g key={y[0]}>
            <BarTag x={720} y={y[0]} a="ø10/2" b="L=845" />
            <BarTag x={716} y={y[1]} a="ø10/2" b="L=835" />
            <BarTag x={tag[0]} y={y[2]} a="ø10/2" b="L=415" />
            <BarTag x={tag[1]} y={y[3]} a="ø10/2" b="L=425" />
          </g>
        ))}
      </g>

      <path d="M542.500 389L985 311L1069 787H542.500z" fill="#b6b6b6" fillOpacity=".3" />

      <g fontFamily="Liberation Sans" fontSize="5" fontWeight="700" fill="#0000ff">
        {[[483, 435], [497, 538], [459, 658], [497, 748]].map(([x, y]) => (
          <g key={y}><text x={x} y={y}>X1</text><text x={x} y={y + 5}>(D1)</text></g>
        ))}
      </g>

      <g stroke="#555" shapeRendering="crispEdges">
        <path d="M1099.500 322V764M1114.500 322V764M1094 322.500H1103M1109 322.500H1118M1094 763.500H1103M1109 763.500H1118M1094 504.500H1103M1094 580.500H1103" />
      </g>
      <path d="M1099.500 323l2 5h-4zM1114.500 323l2 5h-4zM1099.500 763l2-5h-4zM1114.500 763l2-5h-4zM1099.500 504l2-5h-4zM1099.500 505l2 5h-4zM1099.500 580l2-5h-4zM1099.500 581l2 5h-4z" fill="#555" />
      <g fontFamily="Liberation Sans" fontSize="6" fill="#111" textAnchor="middle">
        <text transform="translate(1096 413) rotate(-90)">598.32</text>
        <text transform="translate(1096 542) rotate(-90)">250.00</text>
        <text transform="translate(1111 542) rotate(-90)">1448.32</text>
        <text transform="translate(1096 672) rotate(-90)">600.00</text>
      </g>

      <g fontFamily="Liberation Sans" fontSize="10" textAnchor="middle">
        {bubbles.map(([x, y, t]) => (
          <g key={`${x}-${y}`}><circle cx={x} cy={y} r="10" fill="#fff" stroke="#0080ff" strokeWidth="1.100" /><text x={x} y={y + 4} fill="#000">{t}</text></g>
        ))}
      </g>
    </g>
  </svg>
);

/* ---------- composed parts ---------- */

type BigProps = { w: number; icon?: React.ReactNode; lines: string[]; drop?: 'below' | 'inline'; disabled?: boolean };
const Big = ({ w, icon, lines, drop, disabled }: BigProps) => (
  <BigButton $w={w} disabled={disabled} type="button">
    <BigIcon>{icon}</BigIcon>
    {lines.map((l, i) =>
      drop === 'inline' && i === lines.length - 1
        ? <CaretLine key={l}>{l}<Caret /></CaretLine>
        : <BigLabel key={l}>{l}</BigLabel>)}
    {drop === 'below' && <CaretLine><Caret $light={disabled} /></CaretLine>}
  </BigButton>
);

const tabs: [string, number][] = [
  ['Building Setout', 108], ['Modelling', 74], ['Loading', 66], ['Review', 63], ['Analysis', 65], ['Design', 60],
  ['Drawings & Reports', 131], ['BIM', 48], ['Display', 60], ['Views', 56], ['Help', 48],
];
const contextTabs: [string, number][] = [['General', 65], ['Members', 73], ['Results', 62], ['Contours', 73], ['Solid Model', 85]];
const quick: [string, React.ReactNode][] = [['Home', <Logo />], ['Save', <Save />], ['Undo', <Undo />], ['Redo', <Redo />], ['Selection filter', <Filter />], ['Settings', <Cog />]];
const leftTools: [string, React.ReactNode][] = [['Refresh', <RefreshIcon />], ['Orbit', <GlobeIcon />], ['Axes', <AxesIcon />], ['Labels', <LabelIcon />], ['Box', <CubeIcon />]];
const zoomTools: [string, React.ReactNode][] = [['Zoom window', <ZoomWindow />], ['Zoom previous', <ZoomPrev />], ['Zoom extents', <ZoomAll />]];
const windowIcons: [string, React.ReactNode][] = [
  ['Ribbon options', <Svg><path d="M1.500 2.500h12v11h-12zM1 4.500h13M7.500 12V6.500M5 8.500l2.500-2 2.500 2" stroke="#6e6e6e" /></Svg>],
  ['Minimize', <Svg><path d="M4 10h8" stroke="#6e6e6e" strokeWidth="2" /></Svg>],
  ['Maximize', <Svg><path d="M3.500 4.500h9v8h-9z" stroke="#6e6e6e" /><path d="M3 4.500h10" stroke="#6e6e6e" strokeWidth="3" /></Svg>],
  ['Close', <Svg><path d="M4 4l8.500 8.500M12.500 4L4 12.500" stroke="#6e6e6e" strokeWidth="2" /></Svg>],
];

export default function App() {
  return (
    <Window>
      <GlobalStyle />
      <Defs />
      <Header>
        <HeaderMain>
          <TitleRow>
            <QuickAccess>
              {quick.map(([n, i]) => <QuickButton key={n} aria-label={n}>{i}</QuickButton>)}
            </QuickAccess>
            <WindowTitle>ProtaStructure 2026 (9.0.250) / Project: BA_3_TBDY2018</WindowTitle>
          </TitleRow>
          <TabRow>
            <FileButton aria-label="File"><FileGlyph /><Caret $light /></FileButton>
            {tabs.map(([t, w]) => <Tab key={t} $w={w} $active={t === 'Modelling'}>{t}</Tab>)}
          </TabRow>
        </HeaderMain>
        <ContextGroup>
          <ContextTitle>Analytical Model</ContextTitle>
          <TabRow>{contextTabs.map(([t, w]) => <Tab key={t} $w={w}>{t}</Tab>)}</TabRow>
        </ContextGroup>
        <WindowControls>
          {windowIcons.map(([n, i]) => <QuickButton key={n} aria-label={n}>{i}</QuickButton>)}
        </WindowControls>
      </Header>

      <Ribbon>
        <Group><GroupItems><Big w={68} icon={<SelectionIcon />} lines={['Selection']} drop="below" /></GroupItems></Group>
        <Divider />
        <Group>
          <GroupItems $pad={2}>
            <Big w={47} icon={<GridIcon />} lines={['Grid']} />
            <Big w={94} icon={<OrthoIcon />} lines={['Orthogonal', 'Axis Generator']} />
          </GroupItems>
          <GroupLabel>Grids</GroupLabel>
        </Group>
        <Divider />
        <Group>
          <GroupItems $pad={5}>
            <Big w={50} icon={<PolylineIcon />} lines={['Polyline']} />
            <SmallStack>
              <SmallButton><CircleIcon />Circle</SmallButton>
              <SmallButton><ArcIcon />Arc</SmallButton>
              <SmallButton><RectIcon />Rectangle</SmallButton>
            </SmallStack>
          </GroupItems>
          <GroupLabel>Draw</GroupLabel>
        </Group>
        <Divider />
        <Group>
          <GroupItems>
            <Big w={66} icon={<PedestalIcon />} lines={['Pedestal']} />
            <Big w={86} icon={<WallIcon />} lines={['Sub-Basement', 'Wall']} />
            <Big w={50} icon={<BeamIcon />} lines={['Beam']} drop="below" />
            <Divider $short />
            <Big w={50} icon={<SlabIcon />} lines={['Slab']} />
            <Big w={46} icon={<RibbedIcon />} lines={['Ribbed', 'Slab']} disabled />
            <Big w={64} icon={<StairIcon />} lines={['Staircase']} drop="below" disabled />
            <Big w={66} icon={<StripIcon />} lines={['Slab Strip']} />
            <Divider $short />
            <IconStack>
              <SmallButton aria-label="Slab opening"><OpeningIcon /></SmallButton>
              <SmallButton aria-label="Copy slabs"><CopiesIcon /></SmallButton>
              <SmallButton aria-label="Slab load"><LoadIcon /></SmallButton>
            </IconStack>
            <Divider $short />
            <Big w={91} icon={<ShearIcon />} lines={['Shearwall', 'Operations']} drop="inline" />
          </GroupItems>
          <GroupLabel>RC Members</GroupLabel>
        </Group>
        <Divider />
        <Group><GroupItems><Big w={81} lines={['Steel', 'Members']} drop="inline" /></GroupItems></Group>
        <Divider />
        <Group><GroupItems><Big w={52} lines={['Tools']} drop="below" /></GroupItems></Group>
        <Divider />
        <Collapse aria-label="Collapse ribbon">
          <svg width="10" height="8" viewBox="0 0 10 8" fill="none" aria-hidden="true"><path d="M1 6l4-4 4 4" stroke="#6e6e6e" strokeWidth="2" /></svg>
        </Collapse>
      </Ribbon>

      <Body>
        <Side>
          <SideTools>
            {leftTools.map(([n, i]) => <QuickButton key={n} aria-label={n}>{i}</QuickButton>)}
            <SideSpacer />
            {zoomTools.map(([n, i]) => <QuickButton key={n} aria-label={n}>{i}</QuickButton>)}
          </SideTools>
          <Search type="text" placeholder="Search..." aria-label="Search" />
          <Tree role="tree">
            {tree.map(n => (
              <Row key={n.text} $level={n.level} $bold={n.bold} role="treeitem" aria-expanded={n.open ? true : n.closed ? false : undefined}>
                <Twisty>
                  {n.open && <svg width="7" height="7" aria-hidden="true"><path d="M6.500 .5v6h-6z" fill="#6e6e6e" /></svg>}
                  {n.closed && <svg width="5" height="8" aria-hidden="true"><path d="M0 0l4.500 4L0 8z" fill="#7a7a7a" /></svg>}
                </Twisty>
                <RowIcon>{treeIcons[n.icon]}</RowIcon>
                {n.text}
              </Row>
            ))}
          </Tree>
        </Side>
        <Doc>
          <DocTabs>
            <DocTab>
              <Svg><path d="M4.500 2v12.500M8.500 2v12.500M12.500 2v12.500M2 4.500h12.500M2 8.500h12.500M2 12.500h12.500" stroke="#2c5f94" /><path d="M0 .5h2M14 .5h2M0 15.500h2M14 15.500h2" stroke="#c2453c" /></Svg>
              <DocName>Storey: 0</DocName>
              <PlainButton aria-label="Close Storey: 0">
                <svg width="11" height="10" viewBox="0 0 11 10" aria-hidden="true"><path d="M1.500 1l8 8M9.500 1l-8 8" stroke="#fff" strokeWidth="1.8" /></svg>
              </PlainButton>
            </DocTab>
            <DocMenu aria-label="Open documents"><Caret /></DocMenu>
          </DocTabs>
          <Canvas><Plan /></Canvas>
        </Doc>
      </Body>
    </Window>
  );
}
